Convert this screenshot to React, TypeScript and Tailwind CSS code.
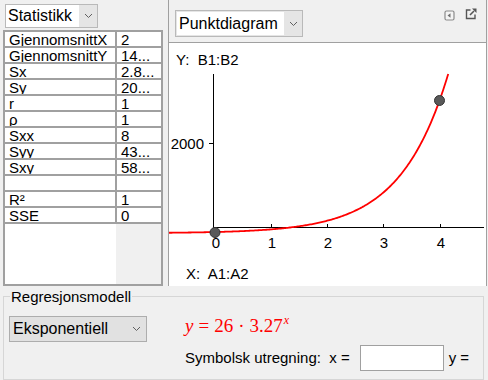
import React from 'react';

const rows: [string, string][] = [
  ['GjennomsnittX', '2'],
  ['GjennomsnittY', '14...'],
  ['Sx', '2.8...'],
  ['Sy', '20...'],
  ['r', '1'],
  ['ρ', '1'],
  ['Sxx', '8'],
  ['Syy', '43...'],
  ['Sxy', '58...'],
  ['', ''],
  ['R²', '1'],
  ['SSE', '0'],
];

// y = 26 * 3.27^x mapped onto the plot's pixel grid
const curvePath = (() => {
  const pts: string[] = [];
  for (let X = -0.82; X <= 4.2; X += 0.02) {
    const sx = 45.5 + X * 56.3;
    const sy = 164.2 - 1.1648 * Math.pow(3.27, X);
    if (sy < 5) {
      pts.push(`${(45.5 + 4.152 * 56.3).toFixed(2)},5`);
      break;
    }
    pts.push(`${sx.toFixed(2)},${sy.toFixed(2)}`);
  }
  return 'M' + pts.join(' L');
})();

const Chevron = () => (
  <svg width="9" height="6" viewBox="0 0 9 6">
    <polyline points="1,1 4.5,4.5 8,1" fill="none" stroke="#606060" strokeWidth="1" />
  </svg>
);

const App: React.FC = () => {
  return (
    <div className="w-[488px] h-[380px] overflow-hidden bg-[#f0f0f0] text-black font-['Liberation_Sans',Arial,sans-serif] flex flex-col">
      {/* Top: statistics table + scatter plot */}
      <div className="flex h-[290px]">
        <div className="w-[168px] flex flex-col">
          <div className="mt-[4px] ml-[5px] w-[93px] h-[24px] flex border border-[#b9b9b9] bg-[#e5e5e5]">
            <div className="bg-white w-[73px] h-full text-[16px] leading-[22px] pl-[2px]">Statistikk</div>
            <div className="flex-1 flex items-center justify-center">
              <Chevron />
            </div>
          </div>
          <div className="mt-[2px] ml-[3px] w-[160px] h-[256px] border-2 border-[#a0a0a0] flex flex-col text-[15px]">
            {rows.map(([label, value], i) => (
              <div key={i} className="flex border-b-2 border-[#a0a0a0] bg-white">
                <div className="w-[110px] h-[14px] leading-[16px] overflow-hidden pl-[4px] whitespace-nowrap">{label}</div>
                <div className="w-[2px] bg-[#a0a0a0]" />
                <div className="flex-1 h-[14px] leading-[16px] overflow-hidden pl-[4px] whitespace-nowrap">{value}</div>
              </div>
            ))}
            <div className="flex-1 flex">
              <div className="w-[111px] bg-white" />
              <div className="flex-1 bg-[#f0f0f0]" />
            </div>
          </div>
        </div>

        <div className="w-[319px] flex flex-col border-l border-r border-[#a0a0a0]">
          <div className="h-[43px] flex items-start border-b border-[#a0a0a0]">
            <div className="mt-[10px] ml-[6px] w-[128px] h-[27px] flex border border-[#b9b9b9] bg-[#e5e5e5]">
              <div className="bg-white w-[107px] my-[1px] ml-[1px] text-[16px] leading-[23px] pl-[2px]">Punktdiagram</div>
              <div className="flex-1 flex items-center justify-center">
                <Chevron />
              </div>
            </div>
            <div className="flex-1" />
            <div className="mt-[8px] mr-[9px] flex items-start gap-[10px]">
              <svg width="11" height="11" viewBox="0 0 11 11" className="mt-[2px]">
                <rect x="1" y="1" width="9" height="9" rx="1.5" fill="#f4f4f4" stroke="#8a8a8a" strokeWidth="1.2" />
                <polygon points="3.5,5.5 6.5,3.3 6.5,7.7" fill="#707070" />
              </svg>
              <svg width="12" height="12" viewBox="0 0 12 12">
                <path d="M5.5 2 H1.5 V10.5 H10 V6.5" fill="none" stroke="#555" strokeWidth="1.4" />
                <line x1="5" y1="7" x2="9" y2="3" stroke="#555" strokeWidth="1.6" />
                <polygon points="7,0.5 11.5,0.5 11.5,5" fill="#555" />
              </svg>
            </div>
          </div>

          <div className="flex-1 bg-white flex flex-col">
            <div className="pt-[8px] pl-[7px] text-[15px] leading-[18px] whitespace-pre">Y:  B1:B2</div>
            <svg width="317" height="190" viewBox="0 0 317 190" className="block">
              <line x1="44.5" y1="5" x2="44.5" y2="158" stroke="#000" strokeWidth="1" />
              <line x1="44" y1="158.5" x2="315" y2="158.5" stroke="#000" strokeWidth="1" />
              <line x1="40" y1="74.5" x2="44" y2="74.5" stroke="#000" strokeWidth="1" />
              {[102.5, 158.5, 214.5, 271.5].map((x) => (
                <line key={x} x1={x} y1="155" x2={x} y2="158" stroke="#000" strokeWidth="1" />
              ))}
              <text x="35" y="79.5" fontSize="15" textAnchor="end" fontFamily="Liberation Sans, Arial, sans-serif">2000</text>
              {[
                ['0', 47],
                ['1', 103],
                ['2', 159],
                ['3', 215],
                ['4', 272],
              ].map(([t, x]) => (
                <text key={t as string} x={x as number} y="178.5" fontSize="15" textAnchor="middle" fontFamily="Liberation Sans, Arial, sans-serif">
                  {t}
                </text>
              ))}
              <path d={curvePath} fill="none" stroke="#ff0000" strokeWidth="1.8" />
              <circle cx="46" cy="163.5" r="5" fill="#595959" stroke="#333" strokeWidth="1" />
              <circle cx="270.5" cy="31.5" r="5" fill="#595959" stroke="#333" strokeWidth="1" />
            </svg>
            <div className="mt-[6px] pl-[17px] text-[15px] leading-[18px] whitespace-pre">X:  A1:A2</div>
          </div>
        </div>
      </div>

      {/* Bottom: regression model */}
      <fieldset className="mt-[2px] ml-[3px] w-[481px] h-[95px] border border-[#d6d6d6] p-0 m-0">
        <legend className="ml-[6px] px-[1px] text-[15px] leading-[17px]">Regresjonsmodell</legend>
        <div className="flex items-start mt-[11px]">
          <div className="ml-[5px] w-[138px] h-[26px] flex items-center justify-between border border-[#adadad] bg-[#e1e1e1] pl-[3px] pr-[5px] text-[16px]">
            <span>Eksponentiell</span>
            <Chevron />
          </div>
          <div className="ml-[38px] flex flex-col">
            <div className="-mt-[1px] h-[22px] leading-[22px] text-[19px] text-[#ff0000] font-['Liberation_Serif',serif] whitespace-nowrap">
              <i>y</i>
              <span className="mx-[5px]">=</span>
              <span>26</span>
              <span className="mx-[5px]">·</span>
              <span>3.27</span>
              <sup className="text-[12px] italic relative -top-[8px] ml-[1px]">x</sup>
            </div>
            <div className="mt-[8px] flex items-center text-[15px]">
              <span className="whitespace-pre">Symbolsk utregning:  x =</span>
              <div className="ml-[10px] w-[84px] h-[26px] border border-[#a0a0a0] bg-white" />
              <span className="ml-[5px] whitespace-pre">y =</span>
            </div>
          </div>
        </div>
      </fieldset>
    </div>
  );
};

export default App;
